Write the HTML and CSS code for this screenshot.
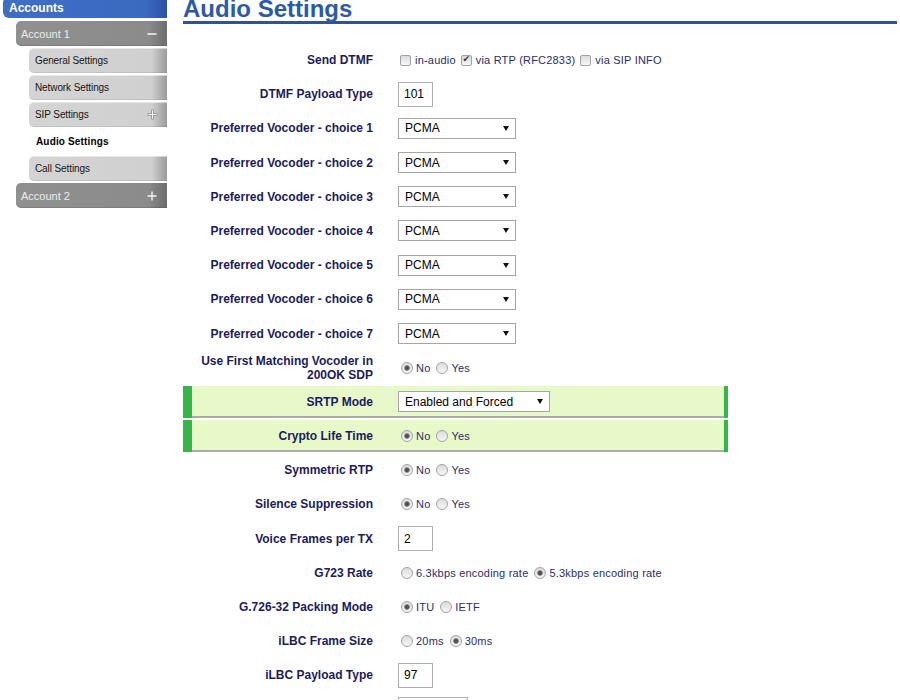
FILE: index.html
```html
<!DOCTYPE html>
<html lang="en">
<head>
    <meta charset="UTF-8">
    <title>Audio Settings</title>
    <link rel="stylesheet" href="styles.css">
</head>
<body>
    <div class="page">
        <nav class="sidebar">
            <div class="nav-title">Accounts</div>
            <div class="nav-account">
                <span>Account 1</span>
                <svg class="toggle" width="10" height="10" viewBox="0 0 10 10"><path d="M0.5 5H9.5" stroke="#f2f2f2" stroke-width="1.6"/></svg>
            </div>
            <ul class="nav-sub">
                <li class="nav-item">General Settings</li>
                <li class="nav-item">Network Settings</li>
                <li class="nav-item">
                    <span>SIP Settings</span>
                    <svg class="toggle" width="11" height="11" viewBox="0 0 11 11">
                        <path d="M5.5 0.5V10.5M0.5 5.5H10.5" stroke="#8c8c8c" stroke-width="2.6"/>
                        <path d="M5.5 1.2V9.8M1.2 5.5H9.8" stroke="#f4f4f4" stroke-width="1.1"/>
                    </svg>
                </li>
                <li class="nav-item current">Audio Settings</li>
                <li class="nav-item">Call Settings</li>
            </ul>
            <div class="nav-account">
                <span>Account 2</span>
                <svg class="toggle" width="10" height="10" viewBox="0 0 10 10"><path d="M5 0.5V9.5M0.5 5H9.5" stroke="#f2f2f2" stroke-width="1.4"/></svg>
            </div>
        </nav>

        <main class="content">
            <h1>Audio Settings</h1>

            <form class="settings">
                <div class="field">
                    <label class="field-label">Send DTMF</label>
                    <div class="field-value">
                        <input type="checkbox" id="dtmf1"><label class="opt" for="dtmf1">in-audio</label>
                        <input type="checkbox" id="dtmf2" checked><label class="opt" for="dtmf2">via RTP (RFC2833)</label>
                        <input type="checkbox" id="dtmf3"><label class="opt" for="dtmf3">via SIP INFO</label>
                    </div>
                </div>
                <div class="field">
                    <label class="field-label">DTMF Payload Type</label>
                    <div class="field-value"><input class="text-input" type="text" value="101"></div>
                </div>
                <div class="field">
                    <label class="field-label">Preferred Vocoder - choice 1</label>
                    <div class="field-value"><span class="select-wrap"><select><option>PCMA</option><option>PCMU</option><option>G729</option><option>G722</option></select></span></div>
                </div>
                <div class="field">
                    <label class="field-label">Preferred Vocoder - choice 2</label>
                    <div class="field-value"><span class="select-wrap"><select><option>PCMA</option><option>PCMU</option><option>G729</option><option>G722</option></select></span></div>
                </div>
                <div class="field">
                    <label class="field-label">Preferred Vocoder - choice 3</label>
                    <div class="field-value"><span class="select-wrap"><select><option>PCMA</option><option>PCMU</option><option>G729</option><option>G722</option></select></span></div>
                </div>
                <div class="field">
                    <label class="field-label">Preferred Vocoder - choice 4</label>
                    <div class="field-value"><span class="select-wrap"><select><option>PCMA</option><option>PCMU</option><option>G729</option><option>G722</option></select></span></div>
                </div>
                <div class="field">
                    <label class="field-label">Preferred Vocoder - choice 5</label>
                    <div class="field-value"><span class="select-wrap"><select><option>PCMA</option><option>PCMU</option><option>G729</option><option>G722</option></select></span></div>
                </div>
                <div class="field">
                    <label class="field-label">Preferred Vocoder - choice 6</label>
                    <div class="field-value"><span class="select-wrap"><select><option>PCMA</option><option>PCMU</option><option>G729</option><option>G722</option></select></span></div>
                </div>
                <div class="field">
                    <label class="field-label">Preferred Vocoder - choice 7</label>
                    <div class="field-value"><span class="select-wrap"><select><option>PCMA</option><option>PCMU</option><option>G729</option><option>G722</option></select></span></div>
                </div>
                <div class="field">
                    <label class="field-label">Use First Matching Vocoder in 200OK SDP</label>
                    <div class="field-value">
                        <input type="radio" name="firstmatch" id="fm0" checked><label class="opt" for="fm0">No</label>
                        <input type="radio" name="firstmatch" id="fm1"><label class="opt" for="fm1">Yes</label>
                    </div>
                </div>
                <div class="field changed">
                    <label class="field-label">SRTP Mode</label>
                    <div class="field-value"><span class="select-wrap wide"><select><option>Enabled and Forced</option><option>Disabled</option><option>Enabled but not Forced</option></select></span></div>
                </div>
                <div class="field changed">
                    <label class="field-label">Crypto Life Time</label>
                    <div class="field-value">
                        <input type="radio" name="crypto" id="cl0" checked><label class="opt" for="cl0">No</label>
                        <input type="radio" name="crypto" id="cl1"><label class="opt" for="cl1">Yes</label>
                    </div>
                </div>
                <div class="field">
                    <label class="field-label">Symmetric RTP</label>
                    <div class="field-value">
                        <input type="radio" name="symrtp" id="sr0" checked><label class="opt" for="sr0">No</label>
                        <input type="radio" name="symrtp" id="sr1"><label class="opt" for="sr1">Yes</label>
                    </div>
                </div>
                <div class="field">
                    <label class="field-label">Silence Suppression</label>
                    <div class="field-value">
                        <input type="radio" name="silence" id="ss0" checked><label class="opt" for="ss0">No</label>
                        <input type="radio" name="silence" id="ss1"><label class="opt" for="ss1">Yes</label>
                    </div>
                </div>
                <div class="field">
                    <label class="field-label">Voice Frames per TX</label>
                    <div class="field-value"><input class="text-input" type="text" value="2"></div>
                </div>
                <div class="field">
                    <label class="field-label">G723 Rate</label>
                    <div class="field-value">
                        <input type="radio" name="g723" id="g0"><label class="opt" for="g0">6.3kbps encoding rate</label>
                        <input type="radio" name="g723" id="g1" checked><label class="opt" for="g1">5.3kbps encoding rate</label>
                    </div>
                </div>
                <div class="field">
                    <label class="field-label">G.726-32 Packing Mode</label>
                    <div class="field-value">
                        <input type="radio" name="g726" id="p0" checked><label class="opt" for="p0">ITU</label>
                        <input type="radio" name="g726" id="p1"><label class="opt" for="p1">IETF</label>
                    </div>
                </div>
                <div class="field">
                    <label class="field-label">iLBC Frame Size</label>
                    <div class="field-value">
                        <input type="radio" name="ilbc" id="f0"><label class="opt" for="f0">20ms</label>
                        <input type="radio" name="ilbc" id="f1" checked><label class="opt" for="f1">30ms</label>
                    </div>
                </div>
                <div class="field">
                    <label class="field-label">iLBC Payload Type</label>
                    <div class="field-value"><input class="text-input" type="text" value="97"></div>
                </div>
                <div class="field">
                    <label class="field-label">Jitter Buffer Minimum Delay</label>
                    <div class="field-value"><input class="text-input long" type="text" value="60"></div>
                </div>
            </form>
        </main>
    </div>
</body>
</html>
```

FILE: styles.css
```css
:root {
    --label-color: #1b1b5e;
    --value-color: #2c2c6c;
    --title-blue: #2d5aa6;
    --changed-bg: #e7f8c9;
    --changed-edge: #38b549;
}

* {
    box-sizing: border-box;
}

body {
    margin: 0;
    font-family: "Liberation Sans", Arial, sans-serif;
    background: #fff;
    overflow: hidden;
}

.page {
    display: flex;
    align-items: flex-start;
}

/* sidebar */

.sidebar {
    width: 167px;
    flex-shrink: 0;
    padding-left: 3px;
    display: flex;
    flex-direction: column;
}

.nav-title {
    margin-top: -3px;
    height: 21px;
    padding-left: 6px;
    line-height: 22px;
    font-size: 12px;
    font-weight: bold;
    color: #fff;
    border-radius: 6px 0 0 6px;
    background: linear-gradient(to right, #3e6ec6 0, #3a69c0 88%, #2a50a3 100%);
}

.nav-account {
    margin: 3px 0 0 13px;
    height: 25px;
    padding: 0 10px 0 5px;
    display: flex;
    align-items: center;
    justify-content: space-between;
    font-size: 11px;
    color: #ededed;
    border-radius: 5px 0 0 5px;
    background: linear-gradient(to right, #909090 0, #8b8b8b 88%, #6c6c6c 100%);
    box-shadow: inset 0 -1px rgba(0, 0, 0, 0.12);
}

.nav-sub {
    list-style: none;
    margin: 0;
    padding: 0;
}

.nav-item {
    margin: 2px 0 0 26px;
    height: 25px;
    padding: 0 9px 0 6px;
    display: flex;
    align-items: center;
    justify-content: space-between;
    font-size: 10px;
    letter-spacing: -0.1px;
    color: #161616;
    border-radius: 5px 0 0 5px;
    background: linear-gradient(to right, #d4d4d4 0, #d0d0d0 89%, #9b9b9b 100%);
    box-shadow: inset 0 1px rgba(255, 255, 255, 0.5), inset 0 -1px rgba(0, 0, 0, 0.08);
}

.nav-item.current {
    background: none;
    box-shadow: none;
    padding-left: 7px;
    font-weight: bold;
    letter-spacing: 0.15px;
    color: #000;
}

.nav-sub + .nav-account {
    margin-top: 2px;
}

.toggle {
    display: block;
}

/* content */

.content {
    margin-left: 16px;
    width: 714px;
}

h1 {
    margin: -3px 0 0;
    height: 27px;
    line-height: 24px;
    font-size: 24px;
    font-weight: bold;
    color: var(--title-blue);
    border-bottom: 3px solid #2e5495;
}

.settings {
    margin-top: 20px;
    display: flex;
    flex-direction: column;
    gap: 2.2px;
}

.field {
    width: 545px;
    height: 32px;
    display: flex;
    align-items: center;
    border-left: 9px solid transparent;
    border-right: 4px solid transparent;
}

.field.changed {
    background: var(--changed-bg);
    border-color: var(--changed-edge);
    box-shadow: inset 0 -2px #ababab;
}

.field-label {
    width: 181px;
    flex-shrink: 0;
    text-align: right;
    font-size: 12px;
    line-height: 14px;
    font-weight: bold;
    color: var(--label-color);
}

.field-value {
    padding-left: 25px;
    display: flex;
    align-items: center;
    font-size: 11px;
    letter-spacing: 0.2px;
    color: var(--value-color);
    white-space: nowrap;
}

.opt {
    margin-right: 3px;
}

.text-input {
    width: 35px;
    height: 25px;
    margin: 0;
    padding: 0 5px;
    border: 1px solid #abadb3;
    font: 12px "Liberation Sans", Arial, sans-serif;
    color: #000;
}

.text-input.long {
    width: 70px;
}

.select-wrap {
    position: relative;
    display: block;
}

.select-wrap select {
    appearance: none;
    width: 118px;
    height: 21px;
    margin: 0;
    padding: 0 0 0 6px;
    border: 1px solid #a5a5a5;
    border-radius: 0;
    background: #fff;
    font: 12px "Liberation Sans", Arial, sans-serif;
    color: #000;
}

.select-wrap.wide select {
    width: 152px;
}

.select-wrap::after {
    content: "";
    position: absolute;
    right: 7px;
    top: 8px;
    border-left: 3px solid transparent;
    border-right: 3px solid transparent;
    border-top: 5px solid #111;
    pointer-events: none;
}

input[type="checkbox"],
input[type="radio"] {
    appearance: none;
    width: 12px;
    height: 12px;
    margin: 0 4px 0 2px;
    border: 1px solid #a2a2a2;
    background: linear-gradient(#dcdcdc, #f6f6f6);
    flex-shrink: 0;
}

input[type="checkbox"] {
    width: 11px;
    height: 11px;
    border-radius: 2px;
}

input[type="checkbox"]:checked::after {
    content: "\2714";
    display: block;
    margin-top: -2px;
    text-align: center;
    font: 9px "DejaVu Sans", sans-serif;
    color: #333;
}

input[type="radio"] {
    margin: 0 3px 0 3px;
    border-radius: 50%;
}

input[type="radio"]:checked {
    background: radial-gradient(circle, #4b4b4b 0, #555 1.8px, #9a9a9a 2.6px, transparent 3.2px),
        linear-gradient(#dcdcdc, #f6f6f6);
}
```
